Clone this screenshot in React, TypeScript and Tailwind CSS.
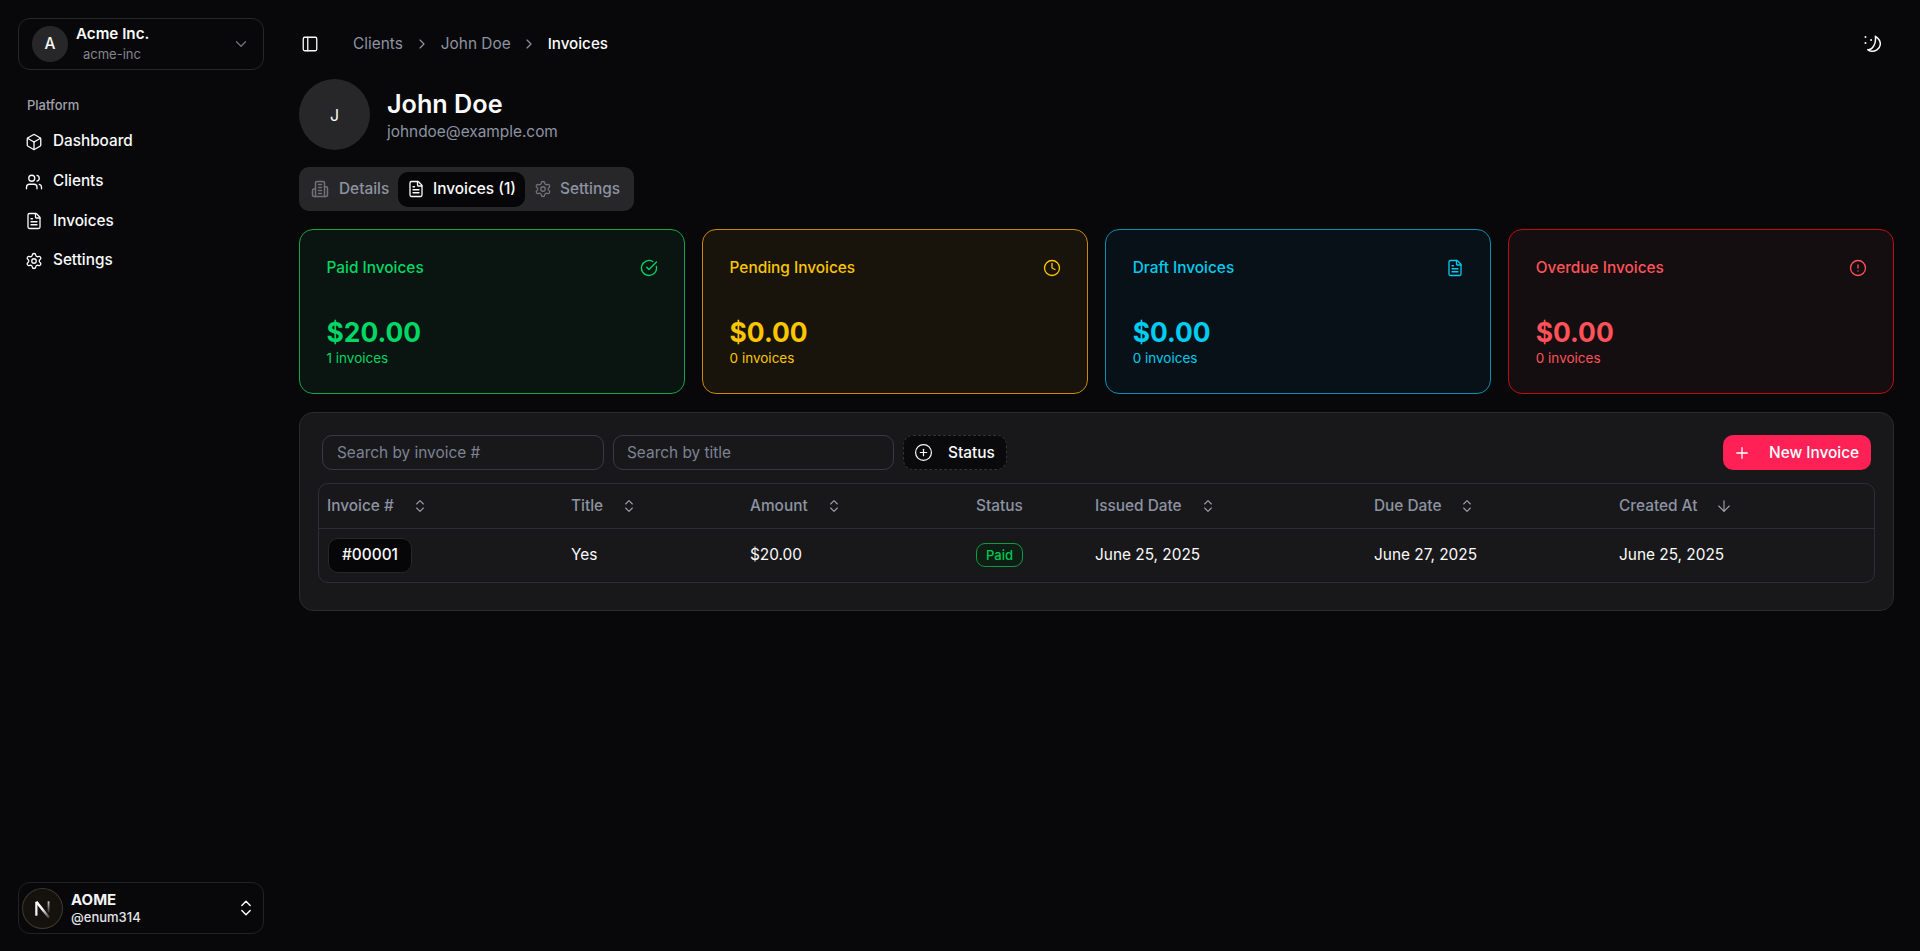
import { Box, Users, FileText, Settings, ChevronDown, ChevronsUpDown, PanelLeft, ChevronRight, CircleCheckBig, Clock, CircleAlert, CirclePlus, Plus, ArrowDown } from "lucide-react";
import type { ReactNode } from "react";

function BuildingIcon({ className }: { className?: string }) {
  return (
    <svg viewBox="0 0 24 24" fill="none" stroke="currentColor" strokeWidth={2} strokeLinecap="round" strokeLinejoin="round" className={className}>
      <path d="M6 22V4a2 2 0 0 1 2-2h8a2 2 0 0 1 2 2v18Z" />
      <path d="M6 12H4a2 2 0 0 0-2 2v6a2 2 0 0 0 2 2h2" />
      <path d="M18 9h2a2 2 0 0 1 2 2v9a2 2 0 0 1-2 2h-2" />
      <path d="M10 6h4M10 10h4M10 14h4M10 18h4" />
    </svg>
  );
}

function MoonStarsIcon({ className }: { className?: string }) {
  return (
    <svg viewBox="0 0 24 24" fill="none" stroke="currentColor" strokeWidth={2} strokeLinecap="round" strokeLinejoin="round" className={className}>
      <path d="M16.5 1.8C21.5 5 23.5 9 23 13C22.5 18 16 23 10 21.5C8.5 21 7.5 20.5 6.5 19.5C12 20.5 18 12 16.5 1.8Z" />
      <path d="M3.3 2.7h.01M10.8 6.7h.01M3.3 10.7h.01" strokeWidth={2.6} />
    </svg>
  );
}

function LogoN() {
  return (
    <svg viewBox="0 0 40 40" className="h-[41px] w-[41px] shrink-0">
      <defs>
        <linearGradient id="nfade" x1="0" y1="0" x2="1" y2="1">
          <stop offset="0.45" stopColor="#ffffff" />
          <stop offset="1" stopColor="#ffffff" stopOpacity="0.15" />
        </linearGradient>
        <linearGradient id="nstem" x1="0" y1="0" x2="0" y2="1">
          <stop offset="0" stopColor="#ffffff" stopOpacity="0.8" />
          <stop offset="1" stopColor="#ffffff" stopOpacity="0.1" />
        </linearGradient>
      </defs>
      <circle cx="20" cy="20" r="19.5" fill="#15120e" stroke="#3f382f" />
      <path d="M14 27V13.5" fill="none" stroke="#f4f4f5" strokeWidth="2.2" />
      <path d="M14 13.5L26.5 29" fill="none" stroke="url(#nfade)" strokeWidth="2.4" />
      <rect x="25" y="13" width="1.8" height="11" fill="url(#nstem)" />
    </svg>
  );
}

function NavItem({ icon, label }: { icon: ReactNode; label: string }) {
  return (
    <div className="flex h-[39.7px] items-center gap-[10px] pl-[7px] text-[15.3px] font-medium text-[#fafafa]">
      {icon}
      <span>{label}</span>
    </div>
  );
}

function Card({ title, amount, sub, icon, box }: { title: string; amount: string; sub: string; icon: ReactNode; box: string }) {
  return (
    <div className={`flex h-[165px] flex-col rounded-[14px] border pl-[26.5px] pr-[26px] pt-[26px] ${box}`}>
      <div className="flex items-center justify-between">
        <span className="text-[15.4px] font-medium leading-6">{title}</span>
        {icon}
      </div>
      <div className="mt-[34px] text-[26.4px] font-bold leading-9">{amount}</div>
      <div className="text-[13.5px] leading-[17px]">{sub}</div>
    </div>
  );
}

function Head({ label, icon }: { label: string; icon?: ReactNode }) {
  return (
    <div className="flex items-center gap-[18px] text-[15.4px] font-medium text-[#8d93a1]">
      <span>{label}</span>
      {icon}
    </div>
  );
}

const sortIcon = <ChevronsUpDown className="h-4 w-4 text-[#a1a1aa]" strokeWidth={1.6} />;
const rowCols = "grid grid-cols-[244px_179px_226px_119px_279px_245px_1fr] items-center pl-[8px]";

export default function App() {
  return (
    <div className="flex h-[951px] w-[1920px] overflow-hidden bg-[#08080b] text-[#fafafa] [font-family:Inter,'Liberation_Sans',sans-serif]">
      <aside className="flex w-[281px] shrink-0 flex-col justify-between px-[18px] pb-[17px] pt-[18px]">
        <div>
          <div className="flex h-[52px] w-[246px] items-center rounded-[12px] border border-[#27272a] pl-[13px] pr-[13px]">
            <div className="flex h-9 w-9 shrink-0 items-center justify-center rounded-full bg-[#27272a] text-[15.4px] font-medium">A</div>
            <div className="ml-[8px] flex flex-1 flex-col">
              <span className="text-[15.2px] font-semibold leading-5">Acme Inc.</span>
              <span className="ml-[7px] text-[13px] leading-5 text-[#85858d]">acme-inc</span>
            </div>
            <ChevronDown className="h-[18px] w-[18px] text-[#71717a]" strokeWidth={1.75} />
          </div>
          <div className="mt-[25px] pl-[9px] text-[13px] font-medium leading-5 text-[#a1a1aa]">Platform</div>
          <nav className="mt-[7px] flex flex-col">
            <NavItem icon={<Box className="h-[18px] w-[18px]" strokeWidth={1.75} />} label="Dashboard" />
            <NavItem icon={<Users className="h-[18px] w-[18px]" strokeWidth={1.75} />} label="Clients" />
            <NavItem icon={<FileText className="h-[18px] w-[18px]" strokeWidth={1.75} />} label="Invoices" />
            <NavItem icon={<Settings className="h-[18px] w-[18px]" strokeWidth={1.75} />} label="Settings" />
          </nav>
        </div>
        <div className="flex h-[52px] w-[246px] items-center rounded-[12px] border border-[#222225] pl-[3px] pr-[7px]">
          <LogoN />
          <div className="ml-[8px] flex flex-1 flex-col">
            <span className="text-[15px] font-bold leading-[19px] text-[#f4f4f5]">AOME</span>
            <span className="text-[13px] font-medium leading-[17px] text-[#e4e4e7]">@enum314</span>
          </div>
          <ChevronsUpDown className="h-5 w-5 text-[#fafafa]" strokeWidth={1.75} />
        </div>
      </aside>

      <main className="flex min-w-0 flex-1 flex-col pl-[18px] pr-[26px]">
        <header className="mt-[22px] flex h-[44px] items-center justify-between">
          <div className="flex items-center">
            <PanelLeft className="ml-[2px] h-[18px] w-[18px]" strokeWidth={1.75} />
            <div className="ml-[34px] flex items-center text-[15.4px] text-[#8d93a1]">
              <span>Clients</span>
              <ChevronRight className="mx-[11px] h-4 w-4" strokeWidth={1.75} />
              <span>John Doe</span>
              <ChevronRight className="mx-[10.5px] h-4 w-4" strokeWidth={1.75} />
              <span className="text-[15.2px] font-medium text-[#fafafa]">Invoices</span>
            </div>
          </div>
          <MoonStarsIcon className="mr-[13px] h-[18px] w-[18px] text-[#fafafa]" />
        </header>

        <section className="mt-[13px] flex items-center">
          <div className="flex h-[71px] w-[71px] items-center justify-center rounded-full bg-[#27272a] text-[16px]">J</div>
          <div className="ml-[17px] flex flex-col">
            <span className="-mt-[1px] text-[25.2px] font-semibold leading-[34px]">John Doe</span>
            <span className="text-[15.4px] leading-[21px] text-[#8d93a1]">johndoe@example.com</span>
          </div>
        </section>

        <div className="mt-[17px] flex h-11 w-[335px] items-center rounded-[10px] bg-[#27272a] px-[5px] text-[15.4px] font-medium text-[#8d93a1]">
          <div className="flex h-[35px] w-[94px] items-center gap-[10px] pl-[7px]">
            <BuildingIcon className="h-[18px] w-[18px] shrink-0 text-[#71717a]" />
            <span>Details</span>
          </div>
          <div className="flex h-[35px] w-[127px] items-center gap-[8px] rounded-[10px] bg-[#060608] pl-[9px] text-[#fafafa]">
            <FileText className="h-[18px] w-[18px] shrink-0" strokeWidth={1.75} />
            <span>Invoices (1)</span>
          </div>
          <div className="flex h-[35px] items-center gap-[8px] pl-[9px]">
            <Settings className="h-[18px] w-[18px] shrink-0 text-[#71717a]" strokeWidth={1.75} />
            <span>Settings</span>
          </div>
        </div>

        <div className="mt-[18px] grid grid-cols-4 gap-[17.4px]">
          <Card title="Paid Invoices" amount="$20.00" sub="1 invoices" box="border-[#16a34a] bg-[#0a1410] text-[#00d866]" icon={<CircleCheckBig className="h-[18px] w-[18px]" strokeWidth={1.75} />} />
          <Card title="Pending Invoices" amount="$0.00" sub="0 invoices" box="border-[#c98a08] bg-[#18140c] text-[#fbc500]" icon={<Clock className="h-[18px] w-[18px]" strokeWidth={1.75} />} />
          <Card title="Draft Invoices" amount="$0.00" sub="0 invoices" box="border-[#0891b2] bg-[#081118] text-[#00ccf0]" icon={<FileText className="h-[18px] w-[18px]" strokeWidth={1.75} />} />
          <Card title="Overdue Invoices" amount="$0.00" sub="0 invoices" box="border-[#c00d12] bg-[#150e10] text-[#ff5258]" icon={<CircleAlert className="h-[18px] w-[18px]" strokeWidth={1.75} />} />
        </div>

        <section className="mt-[18px] h-[199px] rounded-[14px] border border-[#2a2a2d] bg-[#18181b] pl-[18px] pr-[18px] pt-[22px]">
          <div className="flex h-[35px] items-center pr-[4px]">
            <div className="ml-[4px] flex h-[35px] w-[282px] items-center rounded-[10px] border border-[#3a3a3e] pl-[14px] text-[15.4px] text-[#7d8393]">Search by invoice #</div>
            <div className="ml-[9px] flex h-[35px] w-[281px] items-center rounded-[10px] border border-[#3a3a3e] pl-[13px] text-[15.4px] text-[#7d8393]">Search by title</div>
            <div className="ml-[9px] flex h-[35px] w-[104px] items-center rounded-[10px] border border-dashed border-[#333337] bg-[#0a0a0c] pl-[10px] text-[15.4px] font-medium">
              <CirclePlus className="h-[19px] w-[19px]" strokeWidth={1.5} />
              <span className="ml-[15px]">Status</span>
            </div>
            <div className="ml-auto flex h-[35px] w-[148px] items-center whitespace-nowrap rounded-[10px] bg-[#ff2056] pl-[10px] text-[15.4px] font-medium text-white">
              <Plus className="h-[18px] w-[18px]" strokeWidth={1.75} />
              <span className="ml-[18px]">New Invoice</span>
            </div>
          </div>

          <div className="mt-[13px] h-[100px] rounded-[10px] border border-[#2f2f33]">
            <div className={`${rowCols} h-[45px] border-b border-[#2f2f33]`}>
              <Head label="Invoice #" icon={sortIcon} />
              <Head label="Title" icon={sortIcon} />
              <Head label="Amount" icon={sortIcon} />
              <Head label="Status" />
              <Head label="Issued Date" icon={sortIcon} />
              <Head label="Due Date" icon={sortIcon} />
              <Head label="Created At" icon={<ArrowDown className="h-[18px] w-[18px] text-[#a1a1aa]" strokeWidth={1.5} />} />
            </div>
            <div className={`${rowCols} h-[53px] pb-[1px] text-[15.4px]`}>
              <div className="ml-px">
                <span className="inline-flex h-[35px] w-[84px] items-center justify-center rounded-[10px] border border-[#27272a] bg-[#060608] font-medium">#00001</span>
              </div>
              <span>Yes</span>
              <span>$20.00</span>
              <div>
                <span className="inline-flex h-6 w-[47px] items-center justify-center rounded-[9px] border border-[#0f9a45] bg-[#0e1e14] text-[13px] font-medium text-[#00c951]">Paid</span>
              </div>
              <span>June 25, 2025</span>
              <span>June 27, 2025</span>
              <span>June 25, 2025</span>
            </div>
          </div>
        </section>
      </main>
    </div>
  );
}
